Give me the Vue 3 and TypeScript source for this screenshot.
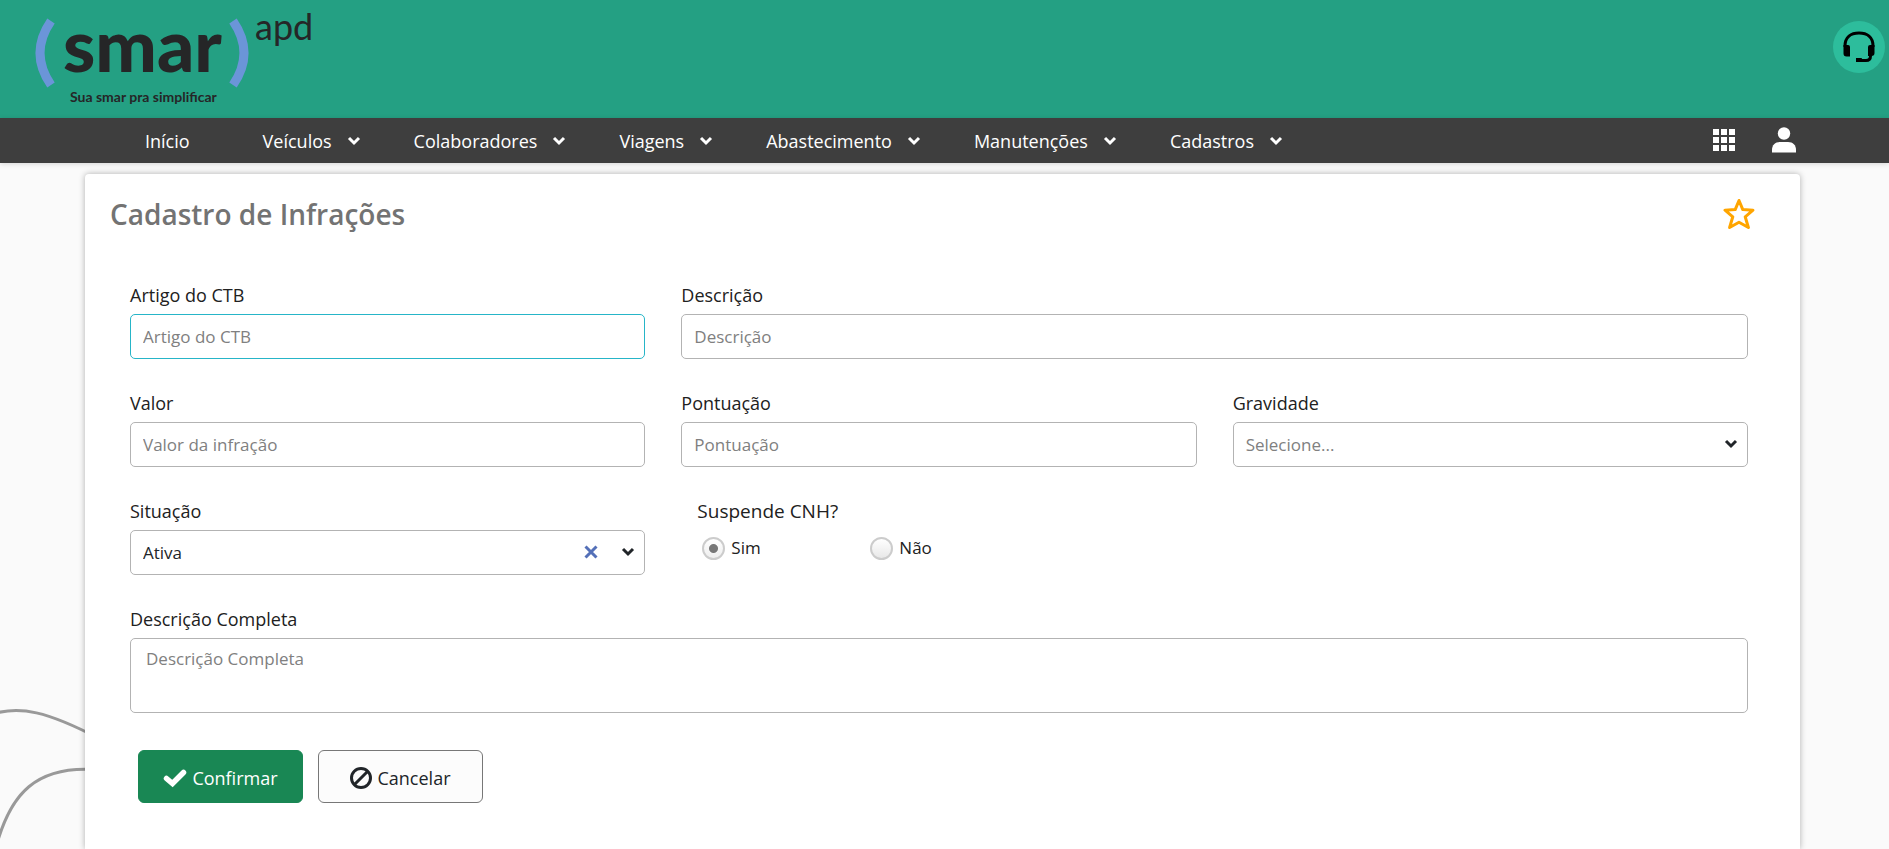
<script setup lang="ts">
import { ref } from 'vue'

interface MenuItem {
  label: string
  expandable: boolean
}

const menu: MenuItem[] = [
  { label: 'Início', expandable: false },
  { label: 'Veículos', expandable: true },
  { label: 'Colaboradores', expandable: true },
  { label: 'Viagens', expandable: true },
  { label: 'Abastecimento', expandable: true },
  { label: 'Manutenções', expandable: true },
  { label: 'Cadastros', expandable: true },
]

const artigo = ref('')
const descricao = ref('')
const valor = ref('')
const pontuacao = ref('')
const gravidade = ref('')
const situacao = ref('Ativa')
const suspende = ref('sim')
const completa = ref('')
</script>

<template>
  <div class="page">
    <svg class="curves" viewBox="0 0 100 149" aria-hidden="true">
      <path d="M-4 13C20 7 45 10 100 39" />
      <path d="M-4 147C10 95 35 64 100 70" />
    </svg>

    <header class="banner">
      <a class="brand" href="#" aria-label="smar apd">
        <svg class="logo" viewBox="0 0 300 118">
          <path class="paren" d="M18 21Q-4 53 18 85" />
          <path class="paren" d="M200 21Q222 53 200 85" />
          <text class="logo-main" x="30" y="72">smar</text>
          <text class="logo-side" x="222" y="40">apd</text>
          <text class="logo-tag" x="37" y="102">Sua smar pra simplificar</text>
        </svg>
      </a>
      <button class="support" type="button" aria-label="Suporte">
        <svg width="32" height="32" viewBox="0 0 32 32" aria-hidden="true">
          <path d="M2 16V15C2 6 8 2 16 2S30 6 30 15V16" fill="none" stroke="#000" stroke-width="3" />
          <path d="M0.500 14h4.500q2 0 2 2V25.500H3.500q-3 0-3-3zM31.500 14h-4.500q-2 0-2 2V25h3.500q3 0 3-3z" />
          <path d="M27.500 23v2q0 4.500-4.500 4.500H16" fill="none" stroke="#000" stroke-width="3" />
          <path d="M13 27h5.500l1 1.500V31H13z" />
        </svg>
      </button>
    </header>

    <nav class="nav" aria-label="Principal">
      <ul class="menu">
        <li v-for="item in menu" :key="item.label" :class="{ first: !item.expandable }">
          <a href="#">
            {{ item.label }}
            <svg v-if="item.expandable" class="chevron" viewBox="0 0 14 10" aria-hidden="true">
              <path d="M2 2l5 5 5-5" />
            </svg>
          </a>
        </li>
      </ul>
      <div class="tools">
        <button type="button" aria-label="Aplicativos">
          <svg width="22" height="22" viewBox="0 0 22 22" fill="#fff" aria-hidden="true">
            <path d="M0 0h6v6H0zM8 0h6v6H8zM16 0h6v6h-6zM0 8h6v6H0zM8 8h6v6H8zM16 8h6v6h-6zM0 16h6v6H0zM8 16h6v6H8zM16 16h6v6h-6z" />
          </svg>
        </button>
        <button type="button" aria-label="Usuário">
          <svg width="24" height="26" viewBox="0 0 24 26" fill="#fff" aria-hidden="true">
            <circle cx="12" cy="6.500" r="6.200" />
            <path d="M0 25.500V23C0 18 3 15 8 15h8c5 0 8 3 8 8v2.500z" />
          </svg>
        </button>
      </div>
    </nav>

    <main class="card">
      <div class="heading">
        <h1>Cadastro de Infrações</h1>
        <button type="button" aria-label="Favoritar">
          <svg width="32" height="32" viewBox="0 0 32 32" aria-hidden="true">
            <path class="star" d="M16 2.500l3.800 9.100 10.200.6-7.800 6.600 3.200 10.700L16 24.300l-9.400 5.200 3.200-10.700L2 12.200l10.200-.6z" />
          </svg>
        </button>
      </div>

      <form class="form" @submit.prevent>
        <div class="field">
          <label for="artigo">Artigo do CTB</label>
          <input id="artigo" v-model="artigo" class="control active" type="text" placeholder="Artigo do CTB" />
        </div>
        <div class="field double">
          <label for="descricao">Descrição</label>
          <input id="descricao" v-model="descricao" class="control" type="text" placeholder="Descrição" />
        </div>
        <div class="field">
          <label for="valor">Valor</label>
          <input id="valor" v-model="valor" class="control" type="text" placeholder="Valor da infração" />
        </div>
        <div class="field">
          <label for="pontuacao">Pontuação</label>
          <input id="pontuacao" v-model="pontuacao" class="control" type="text" placeholder="Pontuação" />
        </div>
        <div class="field">
          <label for="gravidade">Gravidade</label>
          <div class="select">
            <select id="gravidade" v-model="gravidade" class="control" :class="{ empty: !gravidade }">
              <option value="">Selecione...</option>
              <option value="Leve">Leve</option>
              <option value="Média">Média</option>
              <option value="Grave">Grave</option>
            </select>
            <svg class="chevron arrow" viewBox="0 0 14 10" aria-hidden="true"><path d="M2 2l5 5 5-5" /></svg>
          </div>
        </div>
        <div class="field">
          <label for="situacao">Situação</label>
          <div class="select">
            <select id="situacao" v-model="situacao" class="control">
              <option value="Ativa">Ativa</option>
              <option value="Inativa">Inativa</option>
            </select>
            <button class="clear" type="button" aria-label="Limpar" @click="situacao = ''">
              <svg width="14" height="14" viewBox="0 0 14 14" aria-hidden="true"><path d="M1.500 1.500l11 11M12.500 1.500l-11 11" /></svg>
            </button>
            <svg class="chevron arrow" viewBox="0 0 14 10" aria-hidden="true"><path d="M2 2l5 5 5-5" /></svg>
          </div>
        </div>
        <fieldset class="suspend">
          <legend>Suspende CNH?</legend>
          <div class="radios">
            <label for="sim"><input id="sim" v-model="suspende" type="radio" name="suspende" value="sim" />Sim</label>
            <label for="nao"><input id="nao" v-model="suspende" type="radio" name="suspende" value="nao" />Não</label>
          </div>
        </fieldset>
        <div class="field full">
          <label for="completa">Descrição Completa</label>
          <textarea id="completa" v-model="completa" class="control" placeholder="Descrição Completa"></textarea>
        </div>
        <div class="actions">
          <button class="btn confirm" type="submit">
            <svg width="24" height="20" viewBox="0 0 24 20" aria-hidden="true">
              <path d="M3.500 10.500l6 5L20.500 4.500" fill="none" stroke="#fff" stroke-width="5.500" stroke-linecap="round" />
            </svg>
            Confirmar
          </button>
          <button class="btn cancel" type="button">
            <svg width="22" height="22" viewBox="0 0 22 22" fill="none" stroke="#212529" stroke-width="3" aria-hidden="true">
              <circle cx="11" cy="11" r="9.500" />
              <path d="M4.500 17.500l13-13" />
            </svg>
            Cancelar
          </button>
        </div>
      </form>
    </main>
  </div>
</template>

<style>
body {
  margin: 0;
  background: #fafafa;
}
</style>

<style scoped>
.page {
  position: relative;
  display: flex;
  flex-direction: column;
  box-sizing: border-box;
  min-height: 100vh;
  overflow: hidden;
  font: 18px/24px "Open Sans", "Noto Sans", sans-serif;
  color: #212121;
}

.page button {
  font: inherit;
  cursor: pointer;
}

.curves {
  position: absolute;
  left: 0;
  bottom: 0;
  width: 100px;
  height: 149px;
}

.curves path {
  fill: none;
  stroke: #999;
  stroke-width: 3;
}

.banner {
  display: flex;
  justify-content: space-between;
  height: 118px;
  padding: 0 4px 0 33px;
  background: #24a083;
}

.brand,
.logo {
  display: block;
  width: 300px;
  height: 118px;
  overflow: visible;
}

.paren {
  fill: none;
  stroke: #6b95d8;
  stroke-width: 9;
}

.logo text {
  fill: #252627;
  font-family: Lato, sans-serif;
}

.logo .logo-main {
  font-size: 73px;
  font-weight: 900;
}

.logo .logo-side {
  font-size: 36px;
  font-weight: 400;
}

.logo .logo-tag {
  font-size: 14px;
  font-weight: 700;
}

.support {
  display: flex;
  align-items: center;
  justify-content: center;
  width: 52px;
  height: 52px;
  margin-top: 21px;
  padding: 0;
  border: 0;
  border-radius: 50%;
  background: #2dbd9c;
}

.nav {
  position: relative;
  display: flex;
  align-items: center;
  justify-content: space-between;
  height: 45px;
  padding: 0 93px 0 145px;
  background: #3e3e3e;
  box-shadow: 0 1px 5px rgba(0, 0, 0, 0.15);
}

.menu {
  display: flex;
  gap: 53px;
  margin: 0;
  padding: 0;
  list-style: none;
}

.menu .first {
  margin-right: 20px;
}

.menu a {
  display: flex;
  align-items: center;
  gap: 15px;
  color: #fff;
  text-decoration: none;
}

.chevron {
  width: 14px;
  height: 10px;
  fill: none;
  stroke: currentColor;
  stroke-width: 3;
}

.tools {
  display: flex;
  align-items: center;
  gap: 37px;
  padding-bottom: 2px;
}

.tools button,
.heading button,
.clear {
  display: flex;
  padding: 0;
  border: 0;
  background: none;
}

.card {
  position: relative;
  flex: 1;
  margin: 11px 89px 0 85px;
  padding: 21px 52px 46px 45px;
  border-radius: 4px 4px 0 0;
  background: #fff;
  box-shadow: 0 0 6px rgba(0, 0, 0, 0.3);
  box-sizing: border-box;
}

.heading {
  display: flex;
  align-items: center;
  justify-content: space-between;
  margin: 0 -7px 0 -20px;
}

h1 {
  margin: 0;
  font-size: 28px;
  line-height: 38px;
  font-weight: 600;
  color: #737373;
}

.star {
  fill: none;
  stroke: #ffa500;
  stroke-width: 3;
  stroke-linejoin: round;
}

.form {
  display: grid;
  grid-template-columns: repeat(3, minmax(0, 1fr));
  gap: 32px 36px;
  margin-top: 50px;
}

.field {
  display: flex;
  flex-direction: column;
  gap: 7px;
}

.double {
  grid-column: span 2;
}

.full,
.actions {
  grid-column: 1 / -1;
}

.control {
  display: block;
  box-sizing: border-box;
  width: 100%;
  height: 45px;
  margin: 0;
  padding: 0 12px;
  border: 1px solid #b3b3b3;
  border-radius: 5px;
  outline: 0;
  background: #fff;
  color: #212529;
  font: 17px/24px "Open Sans", "Noto Sans", sans-serif;
  appearance: none;
}

.control::placeholder,
.empty {
  color: #808080;
  opacity: 1;
}

.active {
  border-color: #26b5c8;
}

textarea.control {
  height: 75px;
  padding: 8px 15px;
  resize: none;
}

.select {
  position: relative;
  color: #212529;
}

.arrow {
  position: absolute;
  top: 17px;
  right: 10px;
  pointer-events: none;
}

.clear {
  position: absolute;
  top: 15px;
  right: 47px;
}

.clear path {
  stroke: #5470b8;
  stroke-width: 3;
}

.suspend {
  grid-column: span 2;
  margin: 0;
  padding: 0 0 0 16px;
  border: 0;
}

.suspend legend {
  padding: 0;
  font-size: 19px;
}

.radios {
  display: flex;
  margin: 13px 0 0 5px;
  font-size: 17px;
}

.radios label {
  display: flex;
  align-items: center;
  gap: 6px;
  width: 168px;
}

.radios input {
  width: 23px;
  height: 23px;
  margin: 0;
  border: 2px solid #ccc;
  border-radius: 50%;
  background: linear-gradient(#fff, #e8e8e8);
  appearance: none;
}

.radios input:checked {
  background: radial-gradient(circle, #777 0 4px, transparent 5px), linear-gradient(#fff, #eee);
}

.actions {
  display: flex;
  gap: 15px;
  margin: 5px 0 0 8px;
}

.btn {
  display: flex;
  align-items: center;
  justify-content: center;
  gap: 5px;
  box-sizing: border-box;
  width: 165px;
  height: 53px;
  padding: 2px 0 0;
  border: 1px solid #198754;
  border-radius: 6px;
}

.confirm {
  background: #198754;
  color: #fff;
}

.cancel {
  border-color: #777;
  background: #fcfcfc;
  color: #212529;
}
</style>
